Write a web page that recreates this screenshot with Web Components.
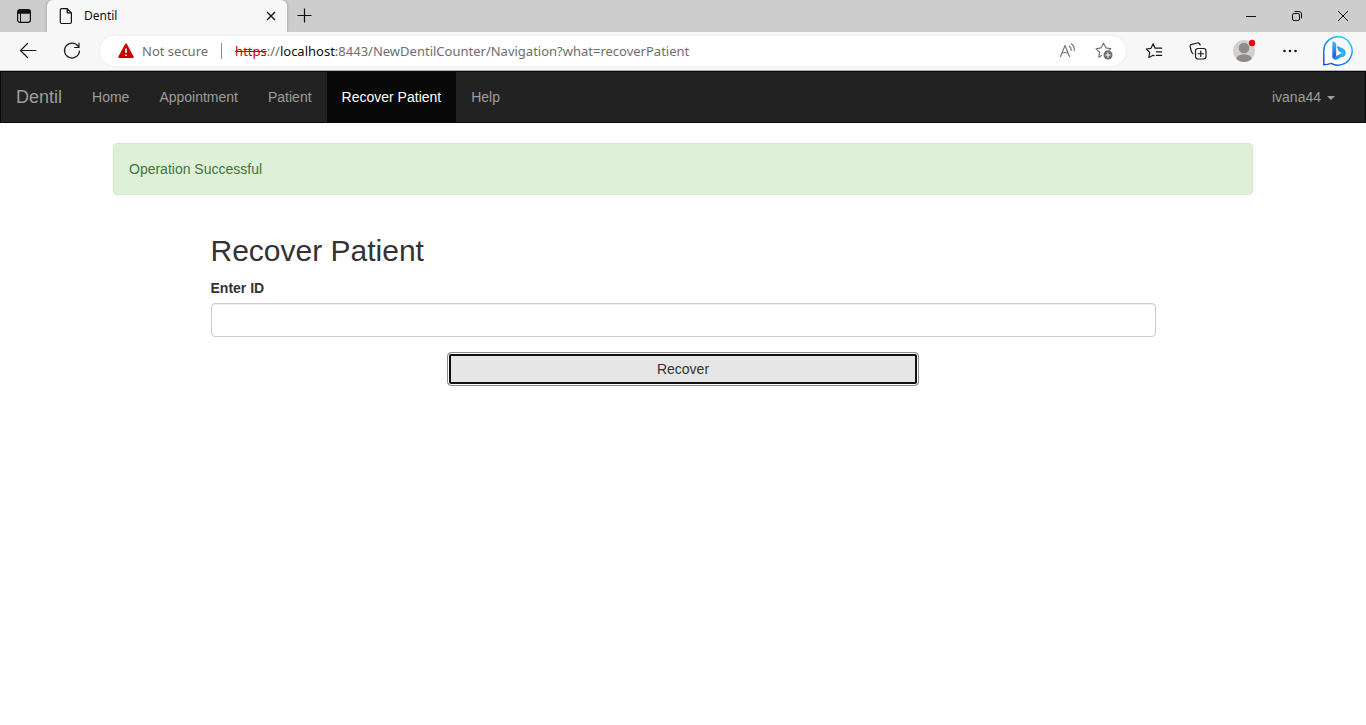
<!DOCTYPE html>
<html lang="en">
<head>
<meta charset="utf-8">
<title>Dentil</title>
<style>
html, body { margin: 0; background: #fff; }
body { font-family: "Liberation Sans", Arial, sans-serif; font-size: 14px; line-height: 20px; color: #333; }
</style>
</head>
<body>
<tab-strip label="Dentil"></tab-strip>
<browser-toolbar>
  <address-bar></address-bar>
</browser-toolbar>
<nav-bar brand="Dentil">
  <nav-link>Home</nav-link>
  <nav-link>Appointment</nav-link>
  <nav-link>Patient</nav-link>
  <nav-link active>Recover Patient</nav-link>
  <nav-link>Help</nav-link>
  <nav-link slot="end" caret>ivana44</nav-link>
</nav-bar>
<main>
  <page-container>
    <alert-box>Operation Successful</alert-box>
  </page-container>
  <recover-form></recover-form>
</main>

<template id="tab-strip">
  <style>
    :host { display: flex; height: 32px; background: #cdcdcd; font: 12px/16px "Noto Sans", "Segoe UI", sans-serif; color: #111; }
    button { border: 0; padding: 0; margin: 0; background: none; display: flex; align-items: center; justify-content: center; color: #111; }
    svg { display: block; fill: none; stroke: currentColor; }
    .menu { width: 47px; }
    .tab { width: 240px; box-sizing: border-box; display: flex; align-items: center; gap: 8px; padding: 0 8px 0 10px; background: #f7f7f7; border-radius: 6px 6px 0 0; box-shadow: 0 0 3px #999; clip-path: inset(0 -4px 0 -4px); }
    .tab span { flex: 1; padding-left: 1px; }
    .tab button { width: 16px; height: 16px; }
    .new { width: 34px; }
    .window { margin-left: auto; display: flex; }
    .window button { width: 46px; }
  </style>
  <button class="menu" aria-label="Tab actions"><svg width="16" height="16" viewBox="0 0 16 16"><rect x="1.6" y="1.6" width="12.8" height="12.8" rx="2.4" stroke-width="1.2"/><path d="M2 2.400h12v2.800H2z" fill="currentColor"/><path d="M4.500 5v9" stroke-width="1"/></svg></button>
  <div class="tab">
    <svg width="18" height="18" viewBox="0 0 18 18" stroke-width="1.2" stroke-linejoin="round"><path d="M4.800 1.600h5.400l4.200 4.200v9.200a1.500 1.500 0 0 1-1.500 1.500H4.800a1.500 1.500 0 0 1-1.500-1.500V3.100a1.500 1.500 0 0 1 1.500-1.500zM10.200 1.600v4.200h4.200"/></svg>
    <span></span>
    <button aria-label="Close tab"><svg width="10" height="10" viewBox="0 0 10 10" stroke-width="1.4"><path d="M1 1l8 8M9 1L1 9"/></svg></button>
  </div>
  <button class="new" aria-label="New tab"><svg width="16" height="16" viewBox="0 0 16 16" stroke-width="1.2"><path d="M1.500 7.500h14M8.500.5v14"/></svg></button>
  <div class="window">
    <button aria-label="Minimize"><svg width="12" height="12" viewBox="0 0 12 12"><path d="M1 6.500h10"/></svg></button>
    <button aria-label="Restore"><svg width="12" height="12" viewBox="0 0 12 12"><rect x="1.500" y="3.500" width="7" height="7" rx="1.500"/><path d="M3.500 1.500h4.500a2.500 2.500 0 0 1 2.500 2.500v4.500"/></svg></button>
    <button aria-label="Close"><svg width="12" height="12" viewBox="0 0 12 12"><path d="M1 1l10 10M11 1L1 11"/></svg></button>
  </div>
</template>

<template id="browser-toolbar">
  <style>
    :host { display: flex; align-items: center; box-sizing: border-box; height: 39px; padding: 0 2px 0 6px; background: #f7f7f7; border-bottom: 1px solid #b5b5b5; }
    button { width: 44px; height: 38px; border: 0; padding: 0; background: none; display: flex; align-items: center; justify-content: center; color: #1b1b1b; }
    svg { display: block; fill: none; stroke: currentColor; stroke-width: 1.2; stroke-linejoin: round; stroke-linecap: round; }
    .profile { width: 48px; }
    .bing { width: 52px; }
    ::slotted(address-bar) { flex: 1; margin: 0 6px; }
  </style>
  <button aria-label="Back"><svg width="18" height="18" viewBox="0 0 18 18"><path d="M17 8.500H1.500M8.500 1.500L1.500 8.500l7 7"/></svg></button>
  <button aria-label="Refresh"><svg width="18" height="18" viewBox="0 0 18 18"><path d="M15.200 4.300A7.500 7.500 0 1 0 16.500 9M16 1v4.500h-4.500"/></svg></button>
  <slot></slot>
  <button aria-label="Favorites"><svg width="18" height="18" viewBox="0 0 18 18"><path d="M10 6.200L8.100 1.700 6 6.300 1.300 7l3.400 3.400-.8 5.100 4.200-2.300 1 .6M10 6.200h6.700M11.300 9.800h5.400M11.300 13.400h5.400"/></svg></button>
  <button aria-label="Collections"><svg width="18" height="18" viewBox="0 0 18 18"><rect x="6.500" y="6.500" width="10.500" height="10.500" rx="2.400"/><path d="M11.750 9v5.500M9 11.750h5.500M4 11.700C2.600 11 2.500 10 2.300 9L1.200 5C.9 3.700 1.500 2.700 2.700 2.400L8.500 1C9.900.7 10.700 1.400 11.200 3"/></svg></button>
  <button class="profile" aria-label="Profile"><svg width="24" height="24" viewBox="0 0 24 24" style="stroke:none"><clipPath id="disc"><circle cx="12" cy="12" r="11"/></clipPath><g clip-path="url(#disc)"><path fill="#d2d0ce" d="M0 0h24v24H0z"/><circle cx="12" cy="9" r="5.300" fill="#8f8a87"/><ellipse cx="12" cy="20.500" rx="8" ry="5.200" fill="#8f8a87"/></g><circle cx="20" cy="4" r="3.200" fill="#e80a12"/></svg></button>
  <button aria-label="Settings and more"><svg width="16" height="4" viewBox="0 0 16 4" style="stroke:none;fill:#1b1b1b"><circle cx="2.500" cy="2" r="1.300"/><circle cx="8" cy="2" r="1.300"/><circle cx="13.500" cy="2" r="1.300"/></svg></button>
  <button class="bing" aria-label="Bing"><svg width="32" height="32" viewBox="0 0 32 32"><defs><linearGradient id="ring" x1="0" y1="1" x2=".6" y2="0"><stop stop-color="#174ae4"/><stop offset=".6" stop-color="#1b8cf0"/><stop offset="1" stop-color="#2cc7f0"/></linearGradient><linearGradient id="mark" x1="0" y1="0" x2="0" y2="1"><stop stop-color="#4cc0f8"/><stop offset="1" stop-color="#1852df"/></linearGradient><linearGradient id="bowl" x1="0" y1="1" x2="1" y2="0"><stop stop-color="#1b6ee8"/><stop offset="1" stop-color="#3fd0f2"/></linearGradient></defs><path d="M16 1.700a14.200 14.200 0 1 1-6.800 26.700c-2.200.8-4.600 1.400-7.400 1.400V16A14.200 14.200 0 0 1 16 1.700z" fill="#fff" stroke="url(#ring)" stroke-width="1.500"/><g stroke="none"><path d="M10.300 6l2.700 1.300c.8.400 1.200 1 1.200 1.900v12.500c0 2.500-3.900 2.500-3.900-.2z" fill="url(#mark)"/><path d="M16.300 11.300c-1-.4-1.500.3-1.200 1.100l1.300 3.200c.2.500.5.800 1 1l2.300 1c2 .9 1.300 3.600-.6 4.600 3.600 0 5-2.800 4.600-5.300-.3-1.600-1.300-2.800-2.600-3.400z" fill="url(#bowl)"/><path d="M10.300 21c0 3.500 3.200 4.500 5.700 3l5.400-3.300c1.500-1 1.200-3.200-.5-3.700l-6.400 4c-2 1.200-4.200 1.400-4.200 0z" fill="url(#bowl)"/></g></svg></button>
</template>

<template id="address-bar">
  <style>
    :host { display: flex; align-items: center; box-sizing: border-box; height: 30px; padding: 0 13px 0 18px; background: #fff; border-radius: 15px; box-shadow: 0 0 3px #e6e6e6; font: 13px/18px "Noto Sans", "Segoe UI", sans-serif; color: #6e6e6e; white-space: nowrap; }
    svg { display: block; flex: none; }
    .warn { margin-right: 8px; }
    .rule { width: 1px; height: 16px; margin: 0 13px; background: #8a8a8a; }
    .url { flex: 1; overflow: hidden; }
    s { color: #c80000; }
    b { font-weight: 400; color: #111; }
    button { border: 0; padding: 0; margin-left: 18px; background: none; color: #6e6e6e; }
    button svg { fill: none; stroke: currentColor; stroke-width: 1.1; stroke-linecap: round; stroke-linejoin: round; }
  </style>
  <svg class="warn" width="16" height="16" viewBox="0 0 16 16"><path d="M8 1.500L14.700 14H1.300z" fill="#c80000" stroke="#c80000" stroke-width="2" stroke-linejoin="round"/><path d="M8 5.500v4.500M8 11.500v1.500" stroke="#fff" stroke-width="1.600"/></svg>
  <span>Not secure</span>
  <i class="rule"></i>
  <span class="url"><s>https</s>://<b>localhost</b>:8443/NewDentilCounter/Navigation?what=recoverPatient</span>
  <button aria-label="Read aloud"><svg width="18" height="18" viewBox="0 0 18 18"><path d="M1.500 14.500L6 3.500l4.500 11M3 10.800h6M10.300 4.200q2 1.500 1.800 4.200M12.300 1.800q3.300 2.400 3 6.800"/></svg></button>
  <button aria-label="Add to favorites"><svg width="18" height="18" viewBox="0 0 18 18"><path d="M6.500 13.500L3.800 15.200l.8-5L1 6.700l5-.8 2.500-4.600L11 5.900l5 .8-2.200 2"/><circle cx="13" cy="13" r="4.500" fill="currentColor" stroke="none"/><path d="M13 10.800v4.400M10.800 13h4.400" stroke="#fff"/></svg></button>
</template>

<template id="nav-bar">
  <style>
    :host { display: block; margin-bottom: 20px; }
    nav { display: flex; flex-wrap: wrap; min-height: 50px; padding-right: 15px; background: #222; border: 1px solid #080808; }
    a { padding: 15px; font-size: 18px; line-height: 20px; color: #9d9d9d; text-decoration: none; }
    .end { margin-left: auto; display: flex; }
  </style>
  <nav><a href="#"></a><slot></slot><div class="end"><slot name="end"></slot></div></nav>
</template>

<template id="nav-link">
  <style>
    :host { display: block; }
    a { display: block; padding: 15px; color: #9d9d9d; text-decoration: none; }
    :host([active]) a { color: #fff; background: #080808; }
    i { display: none; margin-left: 6px; vertical-align: middle; border-top: 4px solid; border-left: 4px solid transparent; border-right: 4px solid transparent; }
    :host([caret]) i { display: inline-block; }
  </style>
  <a href="#"><slot></slot><i></i></a>
</template>

<template id="page-container">
  <style>:host { display: block; box-sizing: border-box; max-width: 1170px; margin: 0 auto; padding: 0 15px; }</style>
  <slot></slot>
</template>

<template id="alert-box">
  <style>:host { display: block; padding: 15px; margin-bottom: 20px; border: 1px solid #d6e9c6; border-radius: 4px; background: #dff0d8; color: #3c763d; }</style>
  <slot></slot>
</template>

<template id="recover-form">
  <style>
    :host { display: grid; grid-template-columns: repeat(12, 1fr); max-width: 1170px; margin: 0 auto; }
    form { grid-column: 2 / -2; padding: 0 15px; }
    h2 { margin: 20px 0 11px; font-size: 30px; line-height: 32px; font-weight: 400; }
    label { display: block; margin-bottom: 5px; font-weight: 700; }
    input { display: block; box-sizing: border-box; width: 100%; height: 34px; margin: 0 0 15px; padding: 6px 12px; border: 1px solid #ccc; border-radius: 4px; background: #fff; font: inherit; color: #555; box-shadow: inset 0 1px 1px rgba(0,0,0,.075); }
    button { display: block; width: 50%; height: 34px; margin: 0 auto; padding: 6px 12px; border: 1px solid #8c8c8c; border-radius: 4px; background: #e6e6e6; box-shadow: inset 0 0 0 1px #fff, inset 0 0 0 3px #101010; font: inherit; line-height: 20px; color: #333; }
  </style>
  <form>
    <h2>Recover Patient</h2>
    <label for="patient-id">Enter ID</label>
    <input id="patient-id" type="text">
    <button type="button">Recover</button>
  </form>
</template>

<script>
class TemplateElement extends HTMLElement {
  constructor() {
    super();
    const template = document.getElementById(this.localName);
    this.attachShadow({ mode: "open" }).append(template.content.cloneNode(true));
  }
}
customElements.define("tab-strip", class extends TemplateElement {
  connectedCallback() { this.shadowRoot.querySelector(".tab span").textContent = this.getAttribute("label"); }
});
customElements.define("nav-bar", class extends TemplateElement {
  connectedCallback() { this.shadowRoot.querySelector("a").textContent = this.getAttribute("brand"); }
});
for (const name of ["browser-toolbar", "address-bar", "nav-link", "page-container", "alert-box", "recover-form"]) {
  customElements.define(name, class extends TemplateElement {});
}
</script>
</body>
</html>
